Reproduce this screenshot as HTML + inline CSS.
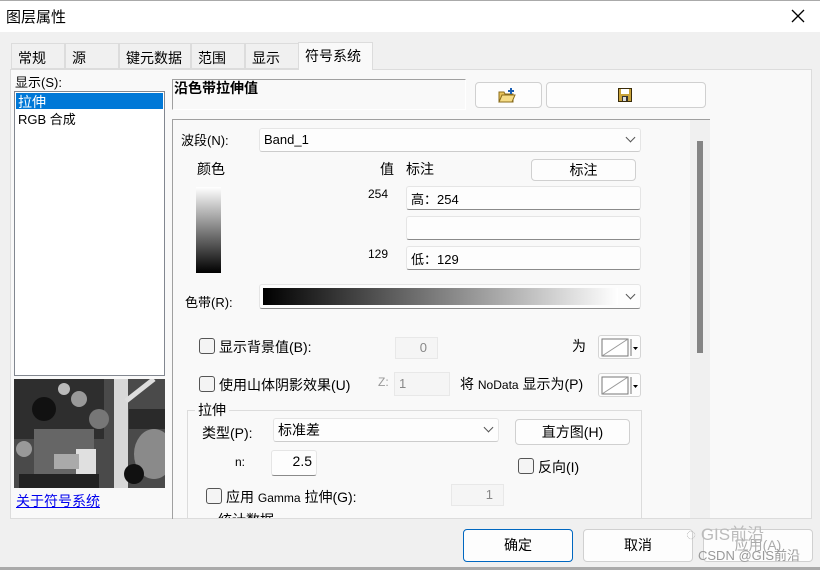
<!DOCTYPE html>
<html><head><meta charset="utf-8"><style>
*{box-sizing:border-box;margin:0;padding:0}
body{width:820px;height:570px;overflow:hidden;background:#f0f0f0;font-family:"Liberation Sans","Noto Sans CJK SC",sans-serif;font-size:13px;color:#000;position:relative}
.a{position:absolute;white-space:nowrap}
.tb{background:#fdfdfd;border:1px solid #e5e5e5;border-bottom:1px solid #8a8a8a;border-radius:3px}
.btn{background:#fdfdfd;border:1px solid #d0d0d0;border-radius:4px;text-align:center}
.cb{width:16px;height:16px;border:1px solid #555;border-radius:3px;background:#f4f4f4}
.dis{background:#f5f5f5;border:1px solid #e8e8e8;color:#888;text-align:right;padding-right:10px}
.chev{position:absolute;right:6px;top:5px;width:7px;height:7px;border-right:1px solid #555;border-bottom:1px solid #555;transform:rotate(45deg)}
</style></head><body>
<div class="a" style="left:0;top:0;width:820px;height:32px;background:#fff;border-top:1px solid #aaa"></div>
<div class="a" style="left:6px;top:6px;font-size:15px">图层属性</div>
<svg class="a" style="left:791px;top:9px" width="14" height="14"><path d="M1 1L13 13M13 1L1 13" stroke="#000" stroke-width="1.3"/></svg>

<!-- tabs -->
<div class="a" style="left:11px;top:43px;width:54px;height:26px;border:1px solid #dcdcdc;background:#f0f0f0"></div>
<div class="a" style="left:65px;top:43px;width:54px;height:26px;border:1px solid #dcdcdc;background:#f0f0f0"></div>
<div class="a" style="left:119px;top:43px;width:72px;height:26px;border:1px solid #dcdcdc;background:#f0f0f0"></div>
<div class="a" style="left:191px;top:43px;width:54px;height:26px;border:1px solid #dcdcdc;background:#f0f0f0"></div>
<div class="a" style="left:245px;top:43px;width:54px;height:26px;border:1px solid #dcdcdc;background:#f0f0f0"></div>
<div class="a" style="left:18px;top:48px;font-size:14px">常规</div>
<div class="a" style="left:72px;top:48px;font-size:14px">源</div>
<div class="a" style="left:126px;top:48px;font-size:14px">键元数据</div>
<div class="a" style="left:198px;top:48px;font-size:14px">范围</div>
<div class="a" style="left:252px;top:48px;font-size:14px">显示</div>

<!-- content panel -->
<div class="a" style="left:10px;top:69px;width:802px;height:450px;background:#f9f9f9;border:1px solid #dcdcdc"></div>
<div class="a" style="left:298px;top:42px;width:75px;height:28px;background:#f9f9f9;border:1px solid #dcdcdc;border-bottom:none"></div>
<div class="a" style="left:305px;top:46px;font-size:14px">符号系统</div>

<div class="a" style="left:15px;top:72px;font-size:13px">显示(S):</div>
<div class="a" style="left:14px;top:91px;width:151px;height:285px;background:#fff;border:1px solid #828790"></div>
<div class="a" style="left:16px;top:93px;width:147px;height:16px;background:#0078d7"></div>
<div class="a" style="left:18px;top:92px;color:#fff;font-size:14px">拉伸</div>
<div class="a" style="left:18px;top:109px;font-size:13px">RGB 合成</div>
<svg class="a" style="left:14px;top:379px" width="151" height="109">
<rect width="151" height="109" fill="#4a4a4a"/>
<rect x="0" y="0" width="90" height="60" fill="#2e2e2e"/>
<rect x="20" y="50" width="60" height="50" fill="#666"/>
<rect x="100" y="0" width="14" height="109" fill="#d8d8d8"/>
<path d="M112 22 L140 0" stroke="#ddd" stroke-width="5"/>
<ellipse cx="140" cy="75" rx="20" ry="25" fill="#8a8a8a"/>
<rect x="62" y="70" width="20" height="30" fill="#e0e0e0"/>
<rect x="40" y="75" width="25" height="15" fill="#aaa"/>
<rect x="115" y="30" width="36" height="20" fill="#2a2a2a"/>
<rect x="5" y="95" width="80" height="14" fill="#222"/>
<circle cx="30" cy="30" r="12" fill="#111"/><circle cx="65" cy="20" r="8" fill="#999"/>
<circle cx="120" cy="95" r="10" fill="#111"/><circle cx="10" cy="70" r="8" fill="#999"/>
<circle cx="85" cy="40" r="10" fill="#777"/><circle cx="50" cy="10" r="6" fill="#bbb"/>
</svg>
<div class="a" style="left:16px;top:491px;color:#0000ee;text-decoration:underline;font-size:14px">关于符号系统</div>

<!-- header -->
<div class="a" style="left:172px;top:79px;width:294px;height:31px;border-top:1px solid #a0a0a0;border-left:1px solid #a0a0a0;border-right:1px solid #fff;border-bottom:1px solid #fff"></div>
<div class="a" style="left:174px;top:78px;font-weight:bold;font-size:14px">沿色带拉伸值</div>
<div class="a btn" style="left:475px;top:82px;width:67px;height:26px"></div>
<div class="a btn" style="left:546px;top:82px;width:160px;height:26px"></div>
<svg class="a" style="left:498px;top:88px" width="18" height="15"><path d="M1 4h5l1 2h8v8H1z" fill="#e9c45a" stroke="#8a6d1c"/><path d="M1 14l3-7h13l-3 7z" fill="#f5dc86" stroke="#8a6d1c"/><path d="M13 0v6M10 3h6" stroke="#1a5fb4" stroke-width="2"/></svg>
<svg class="a" style="left:618px;top:88px" width="14" height="14"><rect x=".5" y=".5" width="13" height="13" fill="#c9a33a" stroke="#3a2c0a"/><rect x="3" y="1" width="8" height="5" fill="#fff"/><rect x="4" y="8" width="6" height="5" fill="#333"/><rect x="5" y="9" width="3" height="4" fill="#ddd"/></svg>

<!-- scroll panel -->
<div class="a" style="left:172px;top:119px;width:538px;height:400px;border-top:1px solid #a0a0a0;border-left:1px solid #a0a0a0"></div>
<div class="a" style="left:690px;top:120px;width:20px;height:398px;background:#f0f0f0"></div>
<div class="a" style="left:697px;top:141px;width:6px;height:212px;background:#858585"></div>

<div class="a" style="left:181px;top:130px">波段(N):</div>
<div class="a tb" style="left:259px;top:128px;width:382px;height:24px;border-bottom-color:#ccc;padding:3px 4px"><span>Band_1</span><div class="chev"></div></div>
<div class="a" style="left:197px;top:159px;font-size:14px">颜色</div>
<div class="a" style="left:196px;top:187px;width:25px;height:86px;background:linear-gradient(#fff,#000)"></div>
<div class="a" style="left:380px;top:159px;font-size:14px">值</div>
<div class="a" style="left:406px;top:159px;font-size:14px">标注</div>
<div class="a btn" style="left:531px;top:159px;width:105px;height:22px;font-size:14px;line-height:20px">标注</div>
<div class="a" style="left:368px;top:187px;font-size:12px">254</div>
<div class="a tb" style="left:406px;top:186px;width:235px;height:24px;padding:2px 4px">高：254</div>
<div class="a tb" style="left:406px;top:216px;width:235px;height:24px"></div>
<div class="a" style="left:368px;top:247px;font-size:12px">129</div>
<div class="a tb" style="left:406px;top:246px;width:235px;height:24px;padding:2px 4px">低：129</div>
<div class="a" style="left:185px;top:292px">色带(R):</div>
<div class="a tb" style="left:259px;top:284px;width:382px;height:25px"><div style="position:absolute;left:3px;top:3px;width:355px;height:17px;background:linear-gradient(90deg,#000,#fff)"></div><div class="chev" style="top:6px"></div></div>

<div class="a cb" style="left:199px;top:338px"></div>
<div class="a" style="left:219px;top:337px;font-size:14px">显示背景值(B):</div>
<div class="a dis" style="left:395px;top:337px;width:43px;height:22px;line-height:20px">0</div>
<div class="a" style="left:572px;top:336px;font-size:14px">为</div>
<div class="a" style="left:598px;top:335px;width:43px;height:24px;border:1px solid #d5d5d5;border-radius:3px;background:#fdfdfd"><svg width="41" height="22"><rect x="3" y="3" width="26" height="17" fill="#fff" stroke="#777"/><path d="M3 20L29 3" stroke="#999"/><path d="M32 3v17" stroke="#777"/><path d="M34 11h5l-2.5 3z" fill="#000"/></svg></div>
<div class="a cb" style="left:199px;top:376px"></div>
<div class="a" style="left:219px;top:375px;font-size:14px">使用山体阴影效果(U)</div>
<div class="a" style="left:378px;top:375px;color:#999;font-size:12px">Z:</div>
<div class="a dis" style="left:394px;top:372px;width:56px;height:24px;text-align:left;padding-left:4px;line-height:22px">1</div>
<div class="a" style="left:460px;top:374px;font-size:14px">将 <span style="font-size:12px">NoData</span> 显示为(P)</div>
<div class="a" style="left:598px;top:373px;width:43px;height:24px;border:1px solid #d5d5d5;border-radius:3px;background:#fdfdfd"><svg width="41" height="22"><rect x="3" y="3" width="26" height="17" fill="#fff" stroke="#777"/><path d="M3 20L29 3" stroke="#999"/><path d="M32 3v17" stroke="#777"/><path d="M34 11h5l-2.5 3z" fill="#000"/></svg></div>

<div class="a" style="left:187px;top:410px;width:455px;height:110px;border:1px solid #dcdcdc;border-bottom:none"></div>
<div class="a" style="left:195px;top:400px;font-size:14px;background:#f9f9f9;padding:0 3px">拉伸</div>
<div class="a" style="left:202px;top:423px;font-size:14px">类型(P):</div>
<div class="a tb" style="left:273px;top:418px;width:226px;height:24px;border-bottom-color:#ccc;padding:1px 4px;font-size:14px">标准差<div class="chev"></div></div>
<div class="a btn" style="left:515px;top:419px;width:115px;height:26px;line-height:24px;font-size:14px">直方图(H)</div>
<div class="a" style="left:235px;top:455px;font-size:12px">n:</div>
<div class="a tb" style="left:271px;top:450px;width:46px;height:26px;text-align:right;padding:2px 4px;font-size:14px">2.5</div>
<div class="a cb" style="left:518px;top:458px"></div>
<div class="a" style="left:538px;top:457px;font-size:14px">反向(I)</div>
<div class="a cb" style="left:206px;top:488px"></div>
<div class="a" style="left:226px;top:487px;font-size:14px">应用 <span style="font-size:12px">Gamma</span> 拉伸(G):</div>
<div class="a dis" style="left:451px;top:484px;width:53px;height:22px;line-height:20px">1</div>
<div class="a" style="left:218px;top:510px;font-size:14px;height:8px;overflow:hidden">统计数据</div>

<!-- bottom -->
<div class="a" style="left:0;top:519px;width:820px;height:51px;background:#f0f0f0"></div>
<div class="a" style="left:0;top:567px;width:820px;height:3px;background:#aaa"></div>
<div class="a btn" style="left:463px;top:529px;width:110px;height:33px;border:1px solid #0067c0;line-height:31px;font-size:14px">确定</div>
<div class="a btn" style="left:583px;top:529px;width:110px;height:33px;line-height:31px;font-size:14px">取消</div>
<div class="a btn" style="left:703px;top:529px;width:110px;height:33px;line-height:31px;font-size:14px;color:#aaa">应用(A)</div>
<div class="a" style="left:686px;top:520px;font-size:17px;color:#bbb">◌ GIS前沿</div>
<div class="a" style="left:698px;top:545px;font-size:13px;color:#999">CSDN @GIS前沿</div>
</body></html>
